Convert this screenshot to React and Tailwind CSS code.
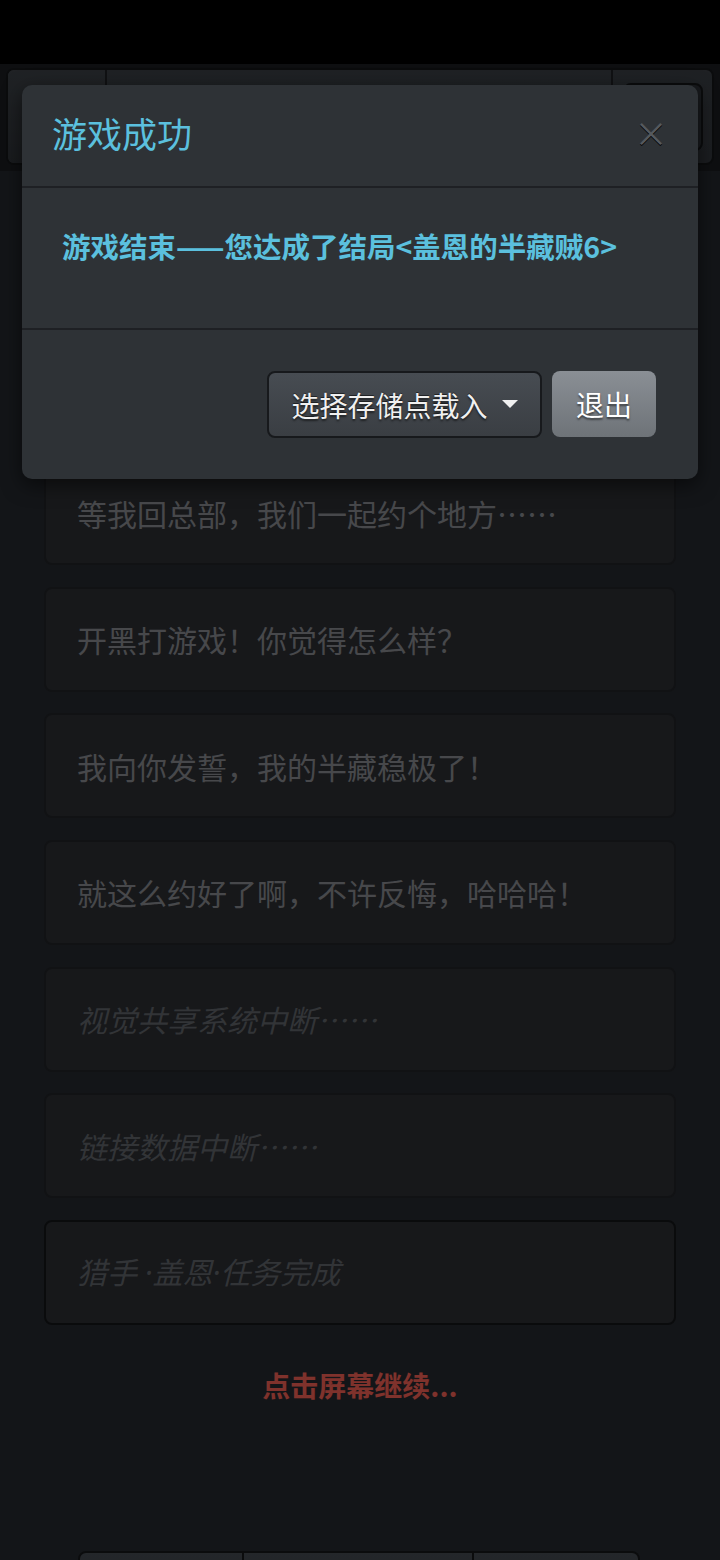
import React from 'react';

// story lines shown under the dialog
const lines = [
  { text: '盖恩：任务目标已经确认，收工。' },
  { text: '对了，下次休假的时候……' },
  { text: '等我回总部，我们一起约个地方……' },
  { text: '开黑打游戏！你觉得怎么样？' },
  { text: '我向你发誓，我的半藏稳极了！' },
  { text: '就这么约好了啊，不许反悔，哈哈哈！' },
  { text: '视觉共享系统中断……', faint: true },
  { text: '链接数据中断……', faint: true },
  { text: ['猎手', ' ·', '盖恩', '·', '任务完成'], faint: true, last: true },
];

function StoryCard({ line }) {
  return (
    <div
      className={`h-[105px] flex items-center pl-[31px] rounded-[8px] border-2 bg-[#2e3035] ${
        line.last ? 'border-[#141619]' : 'border-[#222428]'
      }`}
    >
      <p
        className={`text-[30px] leading-[40px] ${
          line.faint ? 'italic text-[#64686e]' : 'text-[#8e9196]'
        }`}
      >
        {Array.isArray(line.text)
          ? line.text.map((part, i) =>
              i % 2 === 1 ? (
                <span key={i} className="font-['Noto_Sans',sans-serif] whitespace-pre">
                  {part}
                </span>
              ) : (
                <span key={i}>{part}</span>
              )
            )
          : line.text}
      </p>
    </div>
  );
}

export default function App() {
  return (
    <div className="relative h-[1560px] overflow-hidden bg-[#272b30] font-['Noto_Sans_CJK_SC','Noto_Sans',sans-serif]">
      {/* status bar */}
      <div className="h-[64px] bg-black" />

      {/* top nav button group */}
      <div className="bg-[#1c1e22] px-[6px] pt-[4px] pb-[6px]">
        <div className="flex h-[97px] rounded-[8px] border-2 border-[#16181b] bg-gradient-to-b from-[#3e4349] to-[#363a40] overflow-hidden">
          <div className="w-[99px] border-r-2 border-[#202226] bg-gradient-to-b from-[#40454b] to-[#33373c]" />
          <div className="flex-1 border-r-2 border-[#202226]" />
          <div className="w-[99px] flex items-center justify-center">
            <div className="w-[80px] h-[68px] rounded-[8px] border-2 border-[#16181b] bg-[#30343a]" />
          </div>
        </div>
      </div>

      {/* story */}
      <div className="px-[44px] pt-[36px] flex flex-col gap-[21.6px]">
        {lines.map((line, i) => (
          <StoryCard key={i} line={line} />
        ))}
      </div>

      <p className="mt-[40px] text-center text-[28px] leading-[40px] font-bold text-[#ff6459]">
        点击屏幕继续...
      </p>

      {/* bottom button group (cut off) */}
      <div className="mt-[146px] mx-[78px] flex h-[60px]">
        <div className="w-[166px] rounded-l-[8px] border-2 border-[#16181b] bg-gradient-to-b from-[#484e55] to-[#3a3f44]" />
        <div className="w-[230px] border-2 border-l-0 border-[#16181b] bg-gradient-to-b from-[#484e55] to-[#3a3f44]" />
        <div className="w-[166px] rounded-r-[8px] border-2 border-l-0 border-[#16181b] bg-gradient-to-b from-[#484e55] to-[#3a3f44]" />
      </div>

      {/* modal backdrop */}
      <div className="absolute inset-0 bg-black/50" />

      {/* modal */}
      <div className="absolute top-[85px] left-[22px] w-[676px] rounded-[10px] bg-[#2e3236] shadow-[0_6px_20px_rgba(0,0,0,0.55)]">
        <div className="h-[103px] flex items-center justify-between pl-[30px] pr-[30px] pb-[5px] border-b-2 border-[#1e2024]">
          <h4 className="text-[35px] leading-[44px] text-[#5bc0de]">游戏成功</h4>
          <span className="text-[34px] leading-none text-[#55595e] [text-shadow:0_1px_0_#000]">×</span>
        </div>
        <div className="h-[142px] px-[40px] pt-[38px] border-b-2 border-[#1e2024]">
          <p className="text-[28.5px] leading-[40px] font-bold text-[#5bc0de]">
            游戏结束——您达成了结局&lt;盖恩的半藏贼6&gt;
          </p>
        </div>
        <div className="flex justify-end gap-[10px] pt-[41px] pb-[41px] pr-[42px]">
          <button className="h-[67px] w-[275px] flex items-center justify-center gap-[14px] rounded-[8px] border-2 border-[#17191c] bg-gradient-to-b from-[#474c52] to-[#3a3e43] text-[28px] text-[#f0f0f0] [text-shadow:0_-1px_0_rgba(0,0,0,0.5),0_2px_2px_rgba(0,0,0,0.5)]">
            <span>选择存储点载入</span>
            <svg width="16" height="9" viewBox="0 0 16 9">
              <path d="M0 0 L16 0 L8 8 Z" fill="#f0f0f0" />
            </svg>
          </button>
          <button className="h-[66px] w-[104px] rounded-[8px] bg-gradient-to-b from-[#8a8f95] to-[#6e7378] text-[28px] text-white [text-shadow:0_2px_2px_rgba(0,0,0,0.5)]">
            退出
          </button>
        </div>
      </div>
    </div>
  );
}
